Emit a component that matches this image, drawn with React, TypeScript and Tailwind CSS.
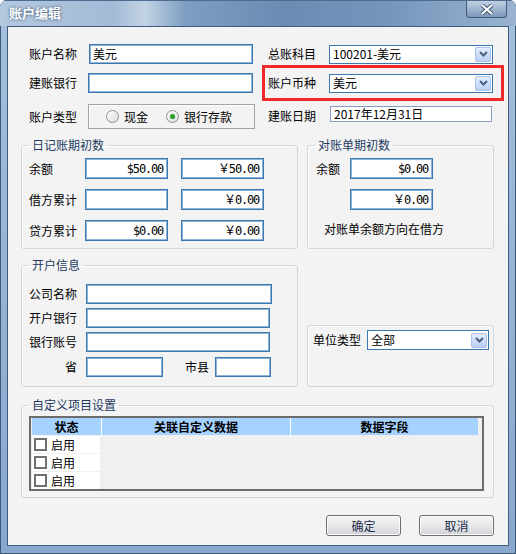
import React from "react";

const font = "font-['Noto_Sans_CJK_SC','Noto_Sans',sans-serif]";
const mono = "font-['DejaVu_Sans_Mono','Noto_Sans_CJK_SC',monospace] tracking-[-1.2px]";

type BoxProps = { className?: string; children?: React.ReactNode };

function TextBox({ className = "", children }: BoxProps) {
  return (
    <div
      className={`bg-white border border-[#3a78ae] shadow-[inset_0_0_0_1px_#8db4d8] flex items-center px-[3px] whitespace-nowrap ${className}`}
    >
      {children}
    </div>
  );
}

function Money({ className = "", children }: BoxProps) {
  return (
    <TextBox className={`justify-end pr-[4px] ${className}`}>
      <span className={mono}>{children}</span>
    </TextBox>
  );
}

function ComboBox({ className = "", children }: BoxProps) {
  return (
    <div
      className={`bg-white border border-[#3a78ae] flex items-center justify-between pl-[3px] pr-[1px] whitespace-nowrap ${className}`}
    >
      <span>{children}</span>
      <div className="w-[16px] h-[15px] rounded-[2px] border border-[#aac3ea] bg-gradient-to-b from-[#e4eefd] to-[#b9cff4] flex items-center justify-center">
        <svg width="9" height="6" viewBox="0 0 9 6">
          <path d="M1 1 L4.5 4.5 L8 1" fill="none" stroke="#4b5f82" strokeWidth="2" />
        </svg>
      </div>
    </div>
  );
}

function Radio({ checked, label }: { checked?: boolean; label: string }) {
  return (
    <div className="flex items-center gap-[5px]">
      <div className="w-[13px] h-[13px] rounded-full border border-[#8a8f96] bg-gradient-to-br from-[#ffffff] to-[#dcdcdc] flex items-center justify-center">
        {checked && <div className="w-[5px] h-[5px] rounded-full bg-[#2e9c2e] shadow-[0_0_1px_#7fd27f]" />}
      </div>
      <span>{label}</span>
    </div>
  );
}

function Group({ title, className = "", children }: BoxProps & { title?: string }) {
  return (
    <fieldset
      className={`border border-[#cdd7df] rounded-[3px] shadow-[inset_1px_1px_0_#ffffff] ${className}`}
    >
      {title && <legend className="ml-[7px] px-[3px] leading-[14px] text-[#1e3a60]">{title}</legend>}
      {children}
    </fieldset>
  );
}

function CheckRow() {
  return (
    <div className="flex h-[17px]">
      <div className="w-[68px] ml-[1px] bg-white flex items-center">
        <div className="ml-[2px] w-[13px] h-[13px] border-2 border-[#6f6f6f] bg-white" />
        <span className="ml-[4px]">启用</span>
      </div>
    </div>
  );
}

function Button({ children }: BoxProps) {
  return (
    <div className="w-[75px] h-[21px] rounded-[3px] border border-[#707070] bg-gradient-to-b from-[#f4f4f4] via-[#e9e9e9] to-[#cfd3d8] shadow-[inset_0_0_0_1px_#fbfbfb] flex items-center justify-center text-[#1b2d4b]">
      {children}
    </div>
  );
}

export default function App() {
  return (
    <div className={`w-[516px] h-[554px] bg-white ${font} text-[12px] leading-[14px] text-black`}>
      <div className="w-full h-full flex flex-col rounded-t-[7px] overflow-hidden bg-gradient-to-b from-[#a6bfdc] to-[#88a8cd] shadow-[inset_0_0_0_1px_#3e5878]">
        {/* Title bar */}
        <div className="h-[26px] shrink-0 flex justify-between bg-[linear-gradient(90deg,#b3c8de_0%,#a4bbd6_22%,#c2d3e5_28%,#7e9dc0_36%,#6a8cb3_55%,#7595bb_75%,#9ab3d0_100%)] border-t border-[#4d6c92]">
          <div className="pl-[9px] pt-[5px] text-[13px] font-bold text-white [text-shadow:0_0_3px_#2c4566]">账户编辑</div>
          <div className="mr-[9px] w-[41px] h-[17px] rounded-b-[4px] border border-t-0 border-[#405b80] bg-gradient-to-b from-[#c2d1e2] to-[#7d98ba] flex items-center justify-center">
            <svg width="14" height="11" viewBox="0 0 14 11">
              <path d="M2 1 L12 10 M12 1 L2 10" stroke="#3b4f6b" strokeWidth="4" />
              <path d="M2 1 L12 10 M12 1 L2 10" stroke="#ffffff" strokeWidth="2.2" />
            </svg>
          </div>
        </div>

        {/* Client area */}
        <div className="mx-[7px] h-[520px] shrink-0 border border-[#3f5c82] bg-[#f3f3f3] flex flex-col">
          {/* Top rows */}
          <div className="pt-[17px] flex flex-col">
            <div className="flex h-[20px]">
              <div className="w-[254px] pl-[21px] flex items-center">
                <span className="w-[60px]">账户名称</span>
                <TextBox className="w-[164px] h-[20px]">美元</TextBox>
              </div>
              <div className="pl-[6px] flex items-center">
                <span className="w-[61px]">总账科目</span>
                <ComboBox className="w-[164px] h-[19px]">100201-美元</ComboBox>
              </div>
            </div>

            <div className="flex h-[36px] mt-[1px]">
              <div className="w-[254px] pl-[21px] flex items-center">
                <span className="w-[59px]">建账银行</span>
                <TextBox className="w-[165px] h-[20px]" />
              </div>
              <div className="w-[242px] border-[3px] border-[#ee2a2a] pl-[3px] flex items-center">
                <span className="w-[61px]">账户币种</span>
                <ComboBox className="w-[164px] h-[19px]">美元</ComboBox>
              </div>
            </div>

            <div className="flex h-[25px] mt-[3px]">
              <div className="w-[254px] pl-[21px] flex items-center">
                <span className="w-[59px]">账户类型</span>
                <div className="w-[167px] h-[25px] border border-[#a3a3a3] shadow-[inset_1px_1px_0_#ffffff] flex items-center pl-[17px] gap-[18px]">
                  <Radio label="现金" />
                  <Radio checked label="银行存款" />
                </div>
              </div>
              <div className="pl-[6px] flex items-start">
                <span className="w-[62px] mt-[5px]">建账日期</span>
                <div className="mt-[2px] w-[162px] h-[16px] bg-white border border-[#8a9bc7] flex items-center pl-[3px]">
                  2017年12月31日
                </div>
              </div>
            </div>
          </div>

          {/* Opening balances */}
          <div className="mt-[9px] pl-[13px] flex gap-[9px]">
            <Group title="日记账期初数" className="w-[277px] h-[111px]">
              <div className="pl-[7px] pt-[6px] flex flex-col gap-[10px]">
                <div className="flex items-center">
                  <span className="w-[56px]">余额</span>
                  <Money className="w-[83px] h-[21px]">$50.00</Money>
                  <Money className="w-[83px] h-[21px] ml-[13px]">￥50.00</Money>
                </div>
                <div className="flex items-center">
                  <span className="w-[56px]">借方累计</span>
                  <Money className="w-[83px] h-[21px]" />
                  <Money className="w-[83px] h-[21px] ml-[13px]">￥0.00</Money>
                </div>
                <div className="flex items-center">
                  <span className="w-[56px]">贷方累计</span>
                  <Money className="w-[83px] h-[21px]">$0.00</Money>
                  <Money className="w-[83px] h-[21px] ml-[13px]">￥0.00</Money>
                </div>
              </div>
            </Group>
            <Group title="对账单期初数" className="w-[187px] h-[111px]">
              <div className="pl-[8px] pt-[6px] flex flex-col">
                <div className="flex items-center">
                  <span className="w-[34px]">余额</span>
                  <Money className="w-[83px] h-[21px]">$0.00</Money>
                </div>
                <Money className="w-[83px] h-[21px] ml-[34px] mt-[10px]">￥0.00</Money>
                <span className="mt-[12px] pl-[8px]">对账单余额方向在借方</span>
              </div>
            </Group>
          </div>

          {/* Bank info */}
          <div className="mt-[9px] pl-[13px] flex items-end gap-[9px]">
            <Group title="开户信息" className="w-[277px] h-[129px]">
              <div className="pl-[7px] pt-[12px] flex flex-col">
                <div className="flex items-center">
                  <span className="w-[57px]">公司名称</span>
                  <TextBox className="w-[186px] h-[20px]" />
                </div>
                <div className="flex items-center mt-[4px]">
                  <span className="w-[57px]">开户银行</span>
                  <TextBox className="w-[184px] h-[20px]" />
                </div>
                <div className="flex items-center mt-[4px]">
                  <span className="w-[57px]">银行账号</span>
                  <TextBox className="w-[184px] h-[20px]" />
                </div>
                <div className="flex items-center mt-[5px]">
                  <span className="w-[48px] text-right mr-[9px]">省</span>
                  <TextBox className="w-[77px] h-[20px]" />
                  <span className="ml-[22px] mr-[6px]">市县</span>
                  <TextBox className="w-[56px] h-[20px]" />
                </div>
              </div>
            </Group>
            <Group className="w-[187px] h-[62px]">
              <div className="pl-[5px] pt-[4px] flex items-center">
                <span className="w-[54px]">单位类型</span>
                <ComboBox className="w-[122px] h-[20px]">全部</ComboBox>
              </div>
            </Group>
          </div>

          {/* Custom items */}
          <div className="mt-[11px] pl-[13px]">
            <Group title="自定义项目设置" className="w-[473px] h-[100px]">
              <div className="pl-[7px] pt-[4px]">
                <div className="w-[455px] h-[75px] border-2 border-[#6b6b6b] bg-[#f0f0f0] flex flex-col gap-[1px]">
                  <div className="flex h-[17px] font-bold">
                    <div className="w-[69px] ml-[1px] bg-[#a6d2ff] flex items-center justify-center">状态</div>
                    <div className="w-[189px] border-l border-white bg-[#a6d2ff] flex items-center justify-center">关联自定义数据</div>
                    <div className="w-[188px] border-l border-white bg-[#a6d2ff] flex items-center justify-center">数据字段</div>
                  </div>
                  <CheckRow />
                  <CheckRow />
                  <CheckRow />
                </div>
              </div>
            </Group>
          </div>

          {/* Buttons */}
          <div className="mt-[17px] pr-[14px] flex justify-end gap-[18px]">
            <Button>确定</Button>
            <Button>取消</Button>
          </div>
        </div>
      </div>
    </div>
  );
}
